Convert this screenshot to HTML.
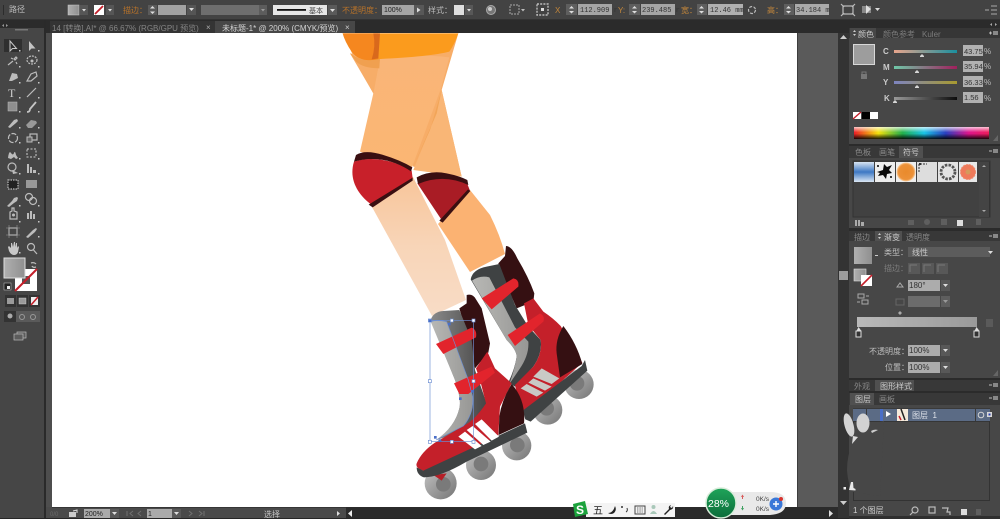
<!DOCTYPE html>
<html><head><meta charset="utf-8">
<style>
html,body{margin:0;padding:0;background:#474747;overflow:hidden}
svg{display:block;filter:blur(.35px)}
text{font-family:"Liberation Sans","Noto Sans CJK SC",sans-serif;font-size:8px;fill:#bdbdbd}
.o{fill:#b8732a}
.i{fill:#b5b5b5}
.s{stroke:#bcbcbc;fill:none;stroke-width:1.2}
.f{fill:#bcbcbc}
</style></head>
<body>
<svg width="1000" height="519" viewBox="0 0 1000 519" xmlns="http://www.w3.org/2000/svg">
<defs>
<linearGradient id="leg" x1="0" y1="0" x2="0" y2="1"><stop offset="0" stop-color="#f8c59a"/><stop offset=".5" stop-color="#f8d5b8"/><stop offset="1" stop-color="#f8dcc6"/></linearGradient>
<linearGradient id="thigh" x1="0" y1="0" x2="0" y2="1"><stop offset="0" stop-color="#f9b578"/><stop offset="1" stop-color="#fbb673"/></linearGradient>
<linearGradient id="gr" x1="0" y1="0" x2="1" y2="0"><stop offset="0" stop-color="#b0b0b0"/><stop offset="1" stop-color="#8f8f8f"/></linearGradient>
<linearGradient id="gbar" x1="0" y1="0" x2="1" y2="0"><stop offset="0" stop-color="#b9b9b9"/><stop offset="1" stop-color="#9a9a9a"/></linearGradient>
<linearGradient id="whl" x1="0" y1="0" x2="1" y2="1"><stop offset="0" stop-color="#c4c4c4"/><stop offset="1" stop-color="#747474"/></linearGradient>
<linearGradient id="grey1" x1="0" y1="0" x2="1" y2="0"><stop offset="0" stop-color="#b8b8b5"/><stop offset="1" stop-color="#979795"/></linearGradient>
<linearGradient id="grey2" x1="0" y1="0" x2="1" y2="0"><stop offset="0" stop-color="#8a8a8a"/><stop offset="1" stop-color="#454545"/></linearGradient>
<linearGradient id="spec" x1="0" y1="0" x2="1" y2="0"><stop offset="0" stop-color="#ee1c25"/><stop offset=".18" stop-color="#f5e20d"/><stop offset=".36" stop-color="#22b14c"/><stop offset=".52" stop-color="#19c5e8"/><stop offset=".68" stop-color="#2a3fc0"/><stop offset=".85" stop-color="#e0148c"/><stop offset="1" stop-color="#ee1c5a"/></linearGradient>
<linearGradient id="specv" x1="0" y1="0" x2="0" y2="1"><stop offset="0" stop-color="#fff" stop-opacity=".75"/><stop offset=".45" stop-color="#fff" stop-opacity="0"/><stop offset=".55" stop-color="#000" stop-opacity="0"/><stop offset="1" stop-color="#000" stop-opacity=".9"/></linearGradient>
<linearGradient id="s1" x1="0" y1="0" x2="1" y2="0"><stop offset="0" stop-color="#e8a58c"/><stop offset="1" stop-color="#1a8f9e"/></linearGradient>
<linearGradient id="s2" x1="0" y1="0" x2="1" y2="0"><stop offset="0" stop-color="#6fc8a8"/><stop offset="1" stop-color="#a01f5c"/></linearGradient>
<linearGradient id="s3" x1="0" y1="0" x2="1" y2="0"><stop offset="0" stop-color="#7d84c0"/><stop offset="1" stop-color="#a89a30"/></linearGradient>
<linearGradient id="s4" x1="0" y1="0" x2="1" y2="0"><stop offset="0" stop-color="#999"/><stop offset="1" stop-color="#0c0c0c"/></linearGradient>
<linearGradient id="blu" x1="0" y1="0" x2="0" y2="1"><stop offset="0" stop-color="#d8e4f2"/><stop offset=".5" stop-color="#3d78c4"/><stop offset="1" stop-color="#dbe7f3"/></linearGradient>
<radialGradient id="org"><stop offset="0" stop-color="#e98a2c"/><stop offset=".8" stop-color="#ec9138"/><stop offset="1" stop-color="#f9d2a5"/></radialGradient>
<linearGradient id="grn" x1="0" y1="0" x2="0" y2="1"><stop offset="0" stop-color="#1fa45a"/><stop offset="1" stop-color="#0c6d3a"/></linearGradient>
</defs>

<!-- base -->
<rect width="1000" height="519" fill="#474747"/>
<rect width="1000" height="20" fill="#434343"/>
<rect y="19" width="1000" height="1" fill="#333"/>
<rect y="20" width="1000" height="13" fill="#2b2b2b"/>
<rect x="50" y="21" width="165" height="12" fill="#343434"/>
<rect x="215" y="21" width="140" height="12" fill="#474747"/>
<rect x="44" y="33" width="806" height="486" fill="#5a5a5a"/>
<rect x="44" y="33" width="8" height="474" fill="#4e4e4e"/>
<rect x="52" y="33" width="745" height="474" fill="#fff"/>
<rect x="797" y="33" width="1" height="474" fill="#3d3d3d"/>
<rect y="20" width="44" height="499" fill="#464646"/>
<rect x="44" y="20" width="2" height="499" fill="#2a2a2a"/>
<rect y="20" width="44" height="8" fill="#2b2b2b"/>
<rect x="838" y="33" width="11" height="486" fill="#333"/>
<rect x="839" y="271" width="9" height="9" fill="#9c9c9c"/>
<path d="M840 501h7l-3.500 4z" fill="#ccc"/>
<path d="M840 39h7l-3.500-4z" fill="#ccc"/>
<rect x="46" y="507" width="792" height="12" fill="#4a4a4a"/>
<rect x="346" y="507" width="492" height="12" fill="#2b2b2b"/>
<rect x="52" y="507" width="294" height="1" fill="#363636"/>
<rect y="518" width="1000" height="1" fill="#262626"/>

<!-- ARTWORK -->
<g>
<g transform="translate(330,30) scale(.33333)">
 <path d="M75 90L130 190L250 410L395 440L335 180L385 10H40Z" fill="#f7ad68"/>
 <path d="M335 180L395 440L250 420L320 250Z" fill="#f9b676"/>
 <path d="M335 180L320 250L250 410L300 300Z" fill="#f2a558"/>
 <path d="M150 85Q250 70 358 82L333 175L245 415L90 365L130 190Z" fill="url(#thigh)"/>
 <path d="M60 70L150 85L130 190Z" fill="#f7ad68"/>
 <path d="M60 70Q100 100 150 85L148 115Q100 115 78 95Z" fill="#f0a050"/>
 <path d="M38 10H385Q375 40 358 65Q300 80 150 87Q90 100 65 65Q45 35 38 10Z" fill="#fb9b1d"/>
 <path d="M38 10H145V87Q90 100 65 65Q45 35 38 10Z" fill="#f5871f"/>
 <path d="M130 10H150L145 85L125 88Q138 50 130 10Z" fill="#d9691c"/>
</g>
<!-- lower legs in page coords -->
<path d="M438 224L470 190L490 215Q500 235 505 254L470 272Z" fill="#fbb272"/>
<path d="M372 207L413 177L445 240L466 300L432 316Z" fill="url(#leg)"/>
<g transform="translate(330,30) scale(.33333)">
 <path d="M72 395C130 375 200 395 245 422L248 445L125 525C85 495 55 450 72 395Z" fill="#c8202a"/>
 <path d="M72 395L78 375Q105 358 160 375Q210 390 247 412L243 424Q160 370 72 395Z" fill="#3a0f11"/>
 <path d="M116 524L248 443L248 452L128 532Z" fill="#3a0f11"/>
 <path d="M262 460Q340 430 412 462L420 482L335 570Z" fill="#a91c25"/>
 <path d="M260 442Q300 420 350 430Q390 438 412 450L415 465Q340 430 264 462Z" fill="#3a0f11"/>
 <path d="M328 572L414 478L421 483L338 578Z" fill="#3a0f11"/>
</g>
<g transform="translate(400,240) scale(.33333)">
 <!-- back wheels -->
 <circle cx="537" cy="433" r="44" fill="url(#whl)"/><circle cx="531" cy="430" r="22" fill="#7a7a7a"/>
 <circle cx="443" cy="510" r="44" fill="url(#whl)"/><circle cx="440" cy="505" r="22" fill="#7a7a7a"/>
 <!-- back boot -->
 <path d="M295 70L315 48L318 18Q335 18 352 55Q385 110 403 160L400 185L350 205L300 90Z" fill="#351012"/>
 <path d="M212 118Q218 88 260 80L298 72L345 195L385 260L422 300Q428 340 400 380L345 440L325 428Q345 385 350 350Q350 330 320 300Z" fill="#3f4243"/>
 <path d="M216 122Q240 105 268 112L345 262L385 305Q388 345 358 388L328 432Q345 385 350 350Q350 330 320 300Z" fill="url(#grey1)"/>
 <path d="M372 190L400 175L430 215Q460 235 482 258L547 368L385 515L365 530L345 435L400 380Q428 340 422 300L385 255Z" fill="#c4202a"/>
 <path d="M490 258Q465 300 470 340L480 412L547 372Q530 310 490 258Z" fill="#351012"/>
 <path d="M368 512L545 378L555 360L562 392L392 545L376 538Z" fill="#3f4243"/>
 <path d="M245 175L340 115Q358 118 355 140L275 208Z" fill="#e2242c"/>
 <path d="M323 285L420 220Q436 228 430 245L345 318Z" fill="#e2242c"/>
 <path d="M400 410L425 385L478 415L455 432Z" fill="#c9c9c5"/>
 <path d="M385 428L400 415L455 440L435 452Z" fill="#c9c9c5"/>
 <path d="M362 445L380 432L430 458L410 470Z" fill="#c9c9c5"/>
 <!-- front wheels -->
 <circle cx="350" cy="617" r="44" fill="url(#whl)"/><circle cx="352" cy="615" r="22" fill="#7a7a7a"/>
 <circle cx="243" cy="675" r="45" fill="url(#whl)"/><circle cx="243" cy="672" r="22" fill="#7a7a7a"/>
 <circle cx="122" cy="730" r="48" fill="url(#whl)"/><circle cx="130" cy="733" r="22" fill="#7a7a7a"/>
 <path d="M100 705L140 700L125 722Z" fill="#b51f27"/>
 <!-- front boot -->
 <path d="M178 205L200 190L200 165Q218 160 228 178L245 205L270 310L265 338L225 385L205 300Z" fill="#351012"/>
 <path d="M92 240Q100 215 130 213L178 210L215 300L225 390L260 490L225 560L110 600Q165 560 178 505Q185 480 165 420Z" fill="url(#grey2)"/>
 <path d="M92 245Q110 238 140 245L205 420L218 470Q222 520 190 558L108 600Q165 560 178 505Q185 480 165 420Z" fill="url(#grey1)"/>
 <path d="M228 385L262 335L285 385L335 430L300 500L295 585L200 640Q120 690 70 692Q45 685 50 670Q65 635 105 608L190 558Q225 540 258 490L240 420Z" fill="#c4202a"/>
 <path d="M335 432Q305 480 298 530L296 585L372 550Q378 480 335 432Z" fill="#351012"/>
 <path d="M50 682L70 692L375 550L382 578L200 665Q120 712 72 712Q50 705 50 682Z" fill="#3f4243"/>
 <path d="M108 312L215 263Q232 270 228 292L130 342Z" fill="#e2242c"/>
 <path d="M162 430L275 380L285 398L205 462L178 462Z" fill="#e2242c"/>
 <path d="M175 590L195 575L245 618L225 628Z" fill="#fff"/>
 <path d="M200 570L218 558L272 605L250 615Z" fill="#fff"/>
 <path d="M225 552L245 538L297 590L275 602Z" fill="#fff"/>
 <!-- selection -->
 <rect x="90" y="241" width="131" height="364" fill="none" stroke="#6d8fd2" stroke-width="2"/>
 <path d="M92 245Q110 238 140 245L205 420L218 470Q222 520 190 558L108 600" fill="none" stroke="#6d8fd2" stroke-width="2"/>
 <g fill="#fff" stroke="#6d8fd2" stroke-width="2"><rect x="85" y="237" width="9" height="9"/><rect x="151" y="237" width="9" height="9"/><rect x="216" y="237" width="9" height="9"/><rect x="85" y="419" width="9" height="9"/><rect x="216" y="419" width="9" height="9"/><rect x="85" y="601" width="9" height="9"/><rect x="151" y="601" width="9" height="9"/><rect x="216" y="601" width="9" height="9"/></g>
 <g fill="#4a6fc8"><rect x="86" y="238" width="8" height="8"/><rect x="144" y="248" width="8" height="8"/><rect x="177" y="472" width="8" height="8"/><rect x="214" y="450" width="8" height="8"/><rect x="102" y="588" width="8" height="8"/><rect x="116" y="598" width="8" height="8"/></g>
</g>
</g>

<!-- TOP BAR -->
<rect x="3" y="5" width="1" height="10" fill="#2c2c2c"/>
<text x="9" y="12">路径</text>
<rect x="68" y="5" width="11" height="10" fill="url(#gr)" stroke="#ccc" stroke-width=".5"/>
<rect x="80" y="5" width="8" height="10" fill="#565656"/><path d="M82 9h4l-2 2.500z" fill="#ddd"/>
<rect x="94" y="5" width="10" height="10" fill="#fff"/><path d="M95 14L103 6" stroke="#c41f2a" stroke-width="1.800"/>
<rect x="106" y="5" width="8" height="10" fill="#565656"/><path d="M108 9h4l-2 2.500z" fill="#ddd"/>
<text x="123" y="13" class="o">描边：</text>
<rect x="148" y="5" width="9" height="10" fill="#5a5a5a"/><path d="M150 8.500h5l-2.500-2.500zM150 11.500h5l-2.500 2.500z" fill="#ddd"/>
<rect x="158" y="5" width="28" height="10" fill="#a2a2a2"/>
<rect x="187" y="5" width="9" height="10" fill="#555"/><path d="M189 8h5l-2.500 3z" fill="#ddd"/>
<rect x="201" y="5" width="58" height="10" fill="#6e6e6e"/>
<rect x="259" y="5" width="8" height="10" fill="#5c5c5c"/><path d="M261 9h4l-2 2.500z" fill="#999"/>
<rect x="273" y="5" width="54" height="10" fill="#e6e6e6"/>
<rect x="277" y="9" width="29" height="1.800" fill="#111"/>
<text x="309" y="13" style="fill:#444;font-size:7px">基本</text>
<rect x="328" y="5" width="9" height="10" fill="#5a5a5a"/><path d="M330 9h5l-2.500 3z" fill="#ddd"/>
<text x="342" y="13" class="o">不透明度：</text>
<rect x="382" y="5" width="32" height="10" fill="#a5a5a5"/>
<text x="384" y="12" style="fill:#222;font-size:7px">100%</text>
<rect x="414" y="5" width="10" height="10" fill="#585858"/><path d="M417 7.500v5l3.500-2.500z" fill="#ddd"/>
<text x="428" y="13">样式：</text>
<rect x="454" y="5" width="10" height="10" fill="#dedede"/>
<rect x="465" y="5" width="8" height="10" fill="#585858"/><path d="M467 9h4l-2 2.500z" fill="#ddd"/>
<circle cx="491" cy="10" r="4.500" fill="#777" stroke="#aaa"/><circle cx="490" cy="9" r="2" fill="#ccc"/>
<rect x="510" y="5" width="9" height="9" fill="none" stroke="#aaa" stroke-dasharray="2 1"/><path d="M521 9h4l-2 2.500z" fill="#bbb"/>
<rect x="537" y="4" width="11" height="11" fill="none" stroke="#bbb" stroke-dasharray="2 1.200" stroke-width="1.400"/><rect x="541" y="8" width="3" height="3" fill="#ddd"/>
<text x="555" y="13" style="fill:#c4873b">X</text>
<rect x="566" y="4" width="11" height="11" fill="#5e5e5e"/><path d="M569 8.500h5l-2.500-2.500zM569 11h5l-2.500 2.500z" fill="#ddd"/>
<rect x="578" y="4" width="34" height="11" fill="#a5a5a5"/><text x="580" y="12" style="fill:#333;font-size:7px;font-family:'Liberation Mono',monospace">112.909 r</text>
<text x="618" y="13" style="fill:#c4873b">Y:</text>
<rect x="629" y="4" width="11" height="11" fill="#5e5e5e"/><path d="M632 8.500h5l-2.500-2.500zM632 11h5l-2.500 2.500z" fill="#ddd"/>
<rect x="641" y="4" width="34" height="11" fill="#a5a5a5"/><text x="642" y="12" style="fill:#333;font-size:7px;font-family:'Liberation Mono',monospace">239.485 r</text>
<text x="681" y="13" style="fill:#c4873b">宽：</text>
<rect x="697" y="4" width="10" height="11" fill="#5e5e5e"/><path d="M699 8.500h5l-2.500-2.500zM699 11h5l-2.500 2.500z" fill="#ddd"/>
<rect x="708" y="4" width="35" height="11" fill="#b0b0b0"/><text x="710" y="12" style="fill:#333;font-size:7px;font-family:'Liberation Mono',monospace">12.46 mm</text>
<circle cx="752" cy="10" r="3.500" class="s" stroke-dasharray="3 1.500"/>
<text x="767" y="13" style="fill:#c4873b">高：</text>
<rect x="784" y="4" width="10" height="11" fill="#5e5e5e"/><path d="M786 8.500h5l-2.500-2.500zM786 11h5l-2.500 2.500z" fill="#ddd"/>
<rect x="795" y="4" width="34" height="11" fill="#aaa"/><text x="796" y="12" style="fill:#333;font-size:7px;font-family:'Liberation Mono',monospace">34.184 m</text>
<path d="M843 6h10v8h-10zM841 4l3 3M855 4l-3 3M841 16l3-3M855 16l-3-3" class="s" stroke-width="1"/>
<rect x="862" y="6" width="9" height="7" fill="#888"/><path d="M866 5l5 4-5 5z" fill="#ddd"/>
<path d="M875 8h5l-2.500 3z" fill="#ddd"/>
<path d="M985 10h4M991 6h6M991 10h6M991 14h6" stroke="#aaa" fill="none"/>

<!-- TABS -->
<text x="52" y="31" style="fill:#858585">14 [转换].AI* @ 66.67% (RGB/GPU 预览)</text>
<text x="206" y="30" style="fill:#aaa">×</text>
<text x="222" y="31" style="fill:#d5d5d5">未标题-1* @ 200% (CMYK/预览)</text>
<text x="345" y="30" style="fill:#ccc">×</text>
<path d="M4 24l-2 1.500 2 1.500zM6 24l2 1.500-2 1.500z" fill="#999"/>
<rect x="15" y="29" width="13" height="1.500" fill="#777"/>

<!-- TOOLBAR -->
<rect x="4" y="39" width="18" height="13" fill="#2f2f2f"/>
<g>
<path d="M10 41v10l2.500-2.500h4z" fill="none" stroke="#c8c8c8"/>
<path d="M29 41v10l2.500-2.500h4z" fill="#c4c4c4"/>
<path d="M8 65l5-4M14 59l2-2 1 1-2 2zM11 58l2 1M16 62l1 2" class="s"/>
<ellipse cx="32" cy="60" rx="5" ry="4" class="s" stroke-dasharray="2 1"/><circle cx="32" cy="61" r="1.500" class="f"/>
<path d="M9 81l3-8 5 1 1 4-6 3z" class="f"/>
<path d="M27 81l4-7 5-2 1 4-6 5z" class="s"/>
<text x="8" y="97" style="font-family:'Liberation Serif',serif;font-size:12px;fill:#ccc">T</text>
<path d="M27 97L36 88" class="s"/>
<rect x="8" y="102" width="9" height="9" fill="#8f8f8f" stroke="#bbb" stroke-width=".5"/>
<path d="M27 112q3 0 3-3l6-7" stroke="#c4c4c4" stroke-width="1.800" fill="none"/>
<path d="M8 127l6-7 3-1 1 2-2 2-6 5z" class="f"/>
<path d="M26 125l5-5 5 1 1 2-5 5h-4z" fill="#999"/>
<circle cx="13" cy="138" r="4.500" class="s" stroke-dasharray="5 1.500"/>
<rect x="30" y="134" width="7" height="6" class="s"/><rect x="27" y="137" width="5" height="5" fill="#666" stroke="#bcbcbc"/>
<path d="M8 158q1-8 3-5t3 0 2 2l2 3-2 1-2-2-3 2z" class="f"/>
<rect x="27" y="149" width="9" height="8" fill="none" stroke="#ccc" stroke-dasharray="2 1.500"/>
<circle cx="12" cy="167" r="4" class="s"/><path d="M12 170l6 3-5 1z" class="f"/>
<rect x="27" y="164" width="2" height="9" class="f"/><rect x="30" y="167" width="2" height="6" class="f"/><rect x="33" y="170" width="3" height="3" class="f"/>
<rect x="8" y="180" width="10" height="9" fill="#222" stroke="#bbb" stroke-dasharray="1.500 1" stroke-width="1.200"/>
<rect x="26" y="180" width="11" height="8" fill="#999"/>
<path d="M7 206l5-5 2-3 3-1 1 1-1 3-3 2-5 4z" class="f"/>
<circle cx="29" cy="197" r="3.500" class="s"/><circle cx="33" cy="201" r="3.500" class="s"/>
<path d="M10 219v-7l2-1v-3h2v3l3 1v7z" class="s"/><circle cx="13.500" cy="215" r="1.500" class="f"/>
<rect x="27" y="213" width="2" height="6" class="f"/><rect x="30" y="211" width="2" height="8" class="f"/><rect x="33" y="214" width="2" height="5" class="f"/>
<rect x="9" y="228" width="8" height="7" class="s"/><path d="M6 228h14M6 235h14M9 225v13M17 225v13" stroke="#999" fill="none" stroke-width=".6"/>
<path d="M26 237l7-7 3-2 1 1-2 3-7 6z" class="f"/>
<path d="M8 247l1 4q2 4 5 4t4-3l1-5-1-1-1 2 0-5h-1l-1 4v-5h-1l-1 5-1-4h-1l0 5-2-2z" fill="#c8c8c8"/>
<circle cx="31" cy="247" r="3.500" class="s"/><path d="M33.500 250l3.500 4" class="s" stroke-width="1.800"/>
</g>
<g fill="#c8c8c8"><rect x="19" y="50" width="1.500" height="1.500"/><rect x="38" y="50" width="1.500" height="1.500"/><rect x="19" y="66" width="1.500" height="1.500"/><rect x="38" y="66" width="1.500" height="1.500"/><rect x="19" y="82" width="1.500" height="1.500"/><rect x="38" y="82" width="1.500" height="1.500"/><rect x="19" y="97" width="1.500" height="1.500"/><rect x="38" y="97" width="1.500" height="1.500"/><rect x="19" y="111" width="1.500" height="1.500"/><rect x="38" y="111" width="1.500" height="1.500"/><rect x="19" y="127" width="1.500" height="1.500"/><rect x="38" y="127" width="1.500" height="1.500"/><rect x="19" y="142" width="1.500" height="1.500"/><rect x="38" y="142" width="1.500" height="1.500"/><rect x="19" y="158" width="1.500" height="1.500"/><rect x="38" y="158" width="1.500" height="1.500"/><rect x="19" y="173" width="1.500" height="1.500"/><rect x="38" y="173" width="1.500" height="1.500"/><rect x="19" y="205" width="1.500" height="1.500"/><rect x="38" y="205" width="1.500" height="1.500"/><rect x="19" y="221" width="1.500" height="1.500"/><rect x="38" y="221" width="1.500" height="1.500"/><rect x="38" y="236" width="1.500" height="1.500"/><rect x="19" y="252" width="1.500" height="1.500"/></g>
<!-- fill / stroke swatches -->
<rect x="15" y="269" width="22" height="22" fill="#fff"/>
<rect x="22" y="276" width="8" height="8" fill="#555"/>
<path d="M15 291L37 269" stroke="#c41f2a" stroke-width="2"/>
<rect x="4" y="258" width="21" height="20" fill="url(#gr)" stroke="#dedede"/>
<path d="M31 263q3-1 5 1M36 267q-3 1-4-1" class="s" stroke-width=".9"/>
<rect x="4" y="283" width="7" height="7" fill="#222" stroke="#ccc" stroke-width=".5"/><rect x="7" y="286" width="3" height="3" fill="#eee"/>
<rect x="5" y="295" width="11" height="12" fill="#333"/><rect x="7" y="298" width="7" height="6" fill="#9a9a9a"/>
<rect x="17" y="295" width="11" height="12" fill="#333"/><rect x="19" y="298" width="7" height="6" fill="#9a9a9a" stroke="#ddd" stroke-width=".4"/>
<rect x="29" y="295" width="11" height="12" fill="#333"/><rect x="31" y="297" width="7" height="8" fill="#eee"/><path d="M31 305l7-8" stroke="#c41f2a" stroke-width="1.600"/>
<rect x="4" y="311" width="36" height="11" fill="#5a5a5a"/><rect x="4" y="311" width="12" height="11" fill="#333"/>
<circle cx="10" cy="316" r="2.500" fill="#aaa"/><circle cx="22" cy="317" r="2.500" fill="none" stroke="#999"/><circle cx="33" cy="317" r="2.500" fill="none" stroke="#999"/>
<rect x="17" y="332" width="9" height="6" fill="#5c5c5c" stroke="#bbb" stroke-width=".7"/><rect x="14" y="334" width="9" height="6" fill="#5c5c5c" stroke="#bbb" stroke-width=".7"/>

<!-- RIGHT PANELS -->
<rect x="849" y="20" width="151" height="499" fill="#474747"/>
<rect x="849" y="20" width="151" height="8" fill="#2b2b2b"/>
<path d="M992 23l-2 1.500 2 1.500zM995 23l2 1.500-2 1.500z" fill="#aaa"/>
<rect x="849" y="28" width="151" height="10" fill="#363636"/>
<rect x="850" y="28" width="26" height="10" fill="#474747"/>
<text x="858" y="37" style="fill:#ccc">颜色</text>
<path d="M853 32l1.500-2 1.500 2zM853 34l1.500 2 1.500-2z" fill="#ccc"/>
<text x="883" y="37" style="fill:#7c7c7c">颜色参考</text>
<text x="922" y="37" style="fill:#7c7c7c">Kuler</text>
<path d="M989 33h3M990.500 31.500v3" stroke="#bbb"/><rect x="993" y="31" width="5" height="4" fill="#888"/>
<rect x="853.500" y="44.500" width="21" height="20" fill="#9d9d9d" stroke="#d8d8d8"/>
<rect x="861" y="74" width="6" height="5" fill="#777"/><path d="M862 74v-2h4v2" stroke="#777" fill="none"/>
<g font-weight="bold"><text x="883" y="54" style="fill:#ccc">C</text><text x="883" y="70" style="fill:#ccc">M</text><text x="883" y="85" style="fill:#ccc">Y</text><text x="884" y="101" style="fill:#ccc">K</text></g>
<rect x="894" y="50" width="63" height="3" fill="url(#s1)"/>
<rect x="894" y="66" width="63" height="3" fill="url(#s2)"/>
<rect x="894" y="81" width="63" height="3" fill="url(#s3)"/>
<rect x="894" y="97" width="63" height="3" fill="url(#s4)"/>
<g fill="#d5d5d5"><path d="M922 54l2 2v1h-4v-1zM917 70l2 2v1h-4v-1zM917 85l2 2v1h-4v-1zM895 100l2 2v1h-4v-1z"/></g>
<g><rect x="963" y="45" width="20" height="11" fill="#b1b1b1"/><rect x="963" y="61" width="20" height="11" fill="#b1b1b1"/><rect x="963" y="76" width="20" height="11" fill="#b1b1b1"/><rect x="963" y="92" width="20" height="11" fill="#b1b1b1"/></g>
<text x="964" y="54" style="fill:#333;font-size:7.500px">43.75</text><text x="964" y="69" style="fill:#333;font-size:7.500px">35.94</text><text x="964" y="85" style="fill:#333;font-size:7.500px">36.33</text><text x="964" y="100" style="fill:#333;font-size:7.500px">1.56</text>
<text x="984" y="54">%</text><text x="984" y="69">%</text><text x="984" y="85">%</text><text x="984" y="101">%</text>
<rect x="853" y="112" width="8" height="7" fill="#fff"/><path d="M853 119l8-7" stroke="#c41f2a" stroke-width="1.400"/>
<rect x="862" y="112" width="8" height="7" fill="#000"/><rect x="870" y="112" width="8" height="7" fill="#fff"/>
<rect x="854" y="127" width="135" height="12" fill="url(#spec)"/>
<rect x="854" y="127" width="135" height="12" fill="url(#specv)"/>
<path d="M998 141v-6l-5 6z" fill="#666"/>
<!-- swatches panel -->
<rect x="849" y="144" width="151" height="2" fill="#2b2b2b"/>
<rect x="849" y="146" width="151" height="12" fill="#383838"/>
<rect x="899" y="146" width="24" height="12" fill="#505050"/>
<text x="855" y="155" style="fill:#888">色板</text><text x="879" y="155" style="fill:#888">画笔</text><text x="903" y="155" style="fill:#ccc">符号</text>
<path d="M989 151h3" stroke="#bbb"/><rect x="993" y="149" width="5" height="4" fill="#888"/>
<rect x="853" y="161" width="137" height="56" fill="#414141" stroke="#333"/>
<rect x="854" y="162" width="20" height="20" fill="url(#blu)"/>
<rect x="875" y="162" width="20" height="20" fill="#ededed"/>
<path d="M877 172l6-2 1-6 3 3 5-2-3 5 3 3-5 1-1 5-3-4-5 1 2-3z" fill="#0a0a0a"/>
<circle cx="878" cy="166" r="1" fill="#000"/><circle cx="891" cy="177" r="1" fill="#000"/>
<rect x="896" y="162" width="20" height="20" fill="#eee"/><circle cx="906" cy="172" r="9.500" fill="url(#org)"/>
<rect x="917" y="162" width="20" height="20" fill="#ddd"/><path d="M919 172v-8h8" fill="none" stroke="#333" stroke-width="1" stroke-dasharray="2 1"/><rect x="919" y="163" width="2" height="2" fill="#333"/>
<rect x="938" y="162" width="20" height="20" fill="#e3e3e3"/><circle cx="948" cy="172" r="7" fill="none" stroke="#555" stroke-width="2.800" stroke-dasharray="2.500 1.200"/>
<rect x="959" y="162" width="18" height="20" fill="#e8e8e8"/><circle cx="968" cy="172" r="7.500" fill="#ef7a5a" stroke="#ef8b6f" stroke-dasharray="2 1"/><circle cx="968" cy="172" r="2.500" fill="#d49a5b"/>
<rect x="989" y="162" width="1" height="55" fill="#333"/>
<rect x="979" y="162" width="10" height="55" fill="#444"/>
<path d="M982 167l2-2 2 2zM982 210l2 2 2-2z" fill="#aaa"/>
<rect x="855" y="220" width="2" height="6" fill="#aaa"/><rect x="858" y="220" width="2" height="6" fill="#aaa"/><rect x="861" y="222" width="3" height="4" fill="#aaa"/>
<g fill="#5f5f5f"><rect x="908" y="220" width="6" height="5"/><circle cx="927" cy="222" r="3"/><rect x="941" y="219" width="6" height="6"/><rect x="976" y="219" width="5" height="6"/></g>
<rect x="957" y="220" width="6" height="6" fill="#ddd"/>
<!-- gradient panel -->
<rect x="849" y="228" width="151" height="3" fill="#2b2b2b"/>
<rect x="849" y="231" width="151" height="10" fill="#383838"/>
<rect x="875" y="231" width="27" height="10" fill="#505050"/>
<text x="854" y="240" style="fill:#888">描边</text>
<path d="M878 235l1.500-2 1.500 2zM878 237l1.500 2 1.500-2z" fill="#ccc"/>
<text x="884" y="240" style="fill:#ccc">渐变</text><text x="906" y="240" style="fill:#888">透明度</text>
<path d="M989 236h3" stroke="#bbb"/><rect x="993" y="234" width="5" height="4" fill="#888"/>
<rect x="854" y="247" width="18" height="17" fill="url(#gr)"/>
<path d="M875 255h3v1h-3z" fill="#ccc"/>
<text x="884" y="255" style="fill:#c0c0c0">类型：</text>
<rect x="908" y="247" width="82" height="10" fill="#5c5c5c"/><text x="912" y="255" style="fill:#ccc">线性</text><path d="M988 251h5l-2.500 3z" fill="#ddd"/>
<text x="884" y="271" style="fill:#7d7d7d">描边：</text>
<g fill="#585858"><rect x="908" y="263" width="12" height="11"/><rect x="922" y="263" width="12" height="11"/><rect x="936" y="263" width="12" height="11"/></g>
<path d="M910 272v-7h7M924 272v-7h7M938 272v-7h7" stroke="#777" fill="none"/>
<rect x="854" y="269" width="12" height="12" fill="url(#gr)" stroke="#ddd" stroke-width=".6"/>
<rect x="861" y="275" width="11" height="11" fill="#fff"/><path d="M861 286l11-11" stroke="#c41f2a" stroke-width="1.600"/>
<path d="M858 294h6v4h-6zM862 300h6v4h-6z" fill="none" stroke="#aaa"/><path d="M866 296h3M857 302h3" stroke="#aaa"/>
<path d="M897 287l3-4 3 4z" fill="none" stroke="#aaa"/>
<rect x="908" y="280" width="32" height="11" fill="#acacac"/><text x="909" y="288" style="fill:#333">180°</text>
<rect x="941" y="280" width="9" height="11" fill="#585858"/><path d="M943 284h5l-2.500 3z" fill="#ddd"/>
<rect x="896" y="299" width="8" height="6" fill="none" stroke="#666"/>
<rect x="908" y="296" width="32" height="11" fill="#6c6c6c"/><rect x="941" y="296" width="9" height="11" fill="#5e5e5e"/><path d="M943 300h5l-2.500 3z" fill="#999"/>
<path d="M900 311l-2 2 2 2 2-2z" fill="#aaa"/>
<rect x="857" y="317" width="120" height="10" fill="url(#gbar)"/>
<g fill="#333" stroke="#ddd"><rect x="856" y="331" width="5" height="6"/><rect x="974" y="331" width="5" height="6"/></g>
<path d="M858.500 327l-2 4h5zM976.500 327l-2 4h5z" fill="#ddd"/>
<rect x="986" y="319" width="7" height="8" fill="#5a5a5a"/>
<text x="869" y="354" style="fill:#c0c0c0">不透明度：</text>
<rect x="908" y="345" width="32" height="11" fill="#acacac"/><text x="909" y="353" style="fill:#333">100%</text>
<rect x="941" y="345" width="9" height="11" fill="#585858"/><path d="M943 349h5l-2.500 3z" fill="#ddd"/>
<text x="885" y="370" style="fill:#c0c0c0">位置：</text>
<rect x="908" y="362" width="32" height="11" fill="#acacac"/><text x="909" y="370" style="fill:#333">100%</text>
<rect x="941" y="362" width="9" height="11" fill="#585858"/><path d="M943 366h5l-2.500 3z" fill="#ddd"/>
<path d="M998 376v-6l-5 6z" fill="#666"/>
<!-- appearance -->
<rect x="849" y="378" width="151" height="2" fill="#2b2b2b"/>
<rect x="849" y="380" width="151" height="11" fill="#383838"/>
<rect x="875" y="380" width="39" height="11" fill="#505050"/>
<text x="854" y="389" style="fill:#888">外观</text><text x="880" y="389" style="fill:#ccc">图形样式</text>
<path d="M989 385h3" stroke="#bbb"/><rect x="993" y="383" width="5" height="4" fill="#888"/>
<!-- layers -->
<rect x="849" y="391" width="151" height="2" fill="#2b2b2b"/>
<rect x="849" y="393" width="151" height="12" fill="#383838"/>
<rect x="850" y="393" width="24" height="12" fill="#505050"/>
<text x="855" y="402" style="fill:#ccc">图层</text><text x="879" y="402" style="fill:#888">画板</text>
<path d="M989 398h3" stroke="#bbb"/><rect x="993" y="396" width="5" height="4" fill="#888"/>
<rect x="853" y="408" width="137" height="13" fill="#5b6b85"/>
<rect x="853" y="408" width="137" height="1" fill="#3a3a3a"/>
<rect x="866" y="408" width="1" height="13" fill="#3a3a3a"/><rect x="880" y="409" width="3" height="12" fill="#4a6fc8"/>
<path d="M886 411v6l5-3z" fill="#fff"/>
<rect x="897" y="409" width="11" height="12" fill="#f5e9da"/><path d="M901 409l4 11" stroke="#222" stroke-width="1.500"/><path d="M899 416l2 4" stroke="#c41f2a" stroke-width="1.500"/>
<text x="912" y="418" style="fill:#dfe3ea">图层&#160;&#160;1</text>
<rect x="975" y="408" width="1" height="13" fill="#3a3a3a"/>
<circle cx="981" cy="415" r="2.800" fill="none" stroke="#d5d5d5"/>
<rect x="987" y="412" width="5" height="5" fill="#d8d8d8"/><rect x="988.500" y="413.500" width="2" height="2" fill="#2a3fb0"/>
<rect x="853" y="421" width="137" height=".8" fill="#333"/>
<rect x="853" y="421" width="1" height="80" fill="#333"/><rect x="989" y="421" width="1" height="80" fill="#333"/><rect x="853" y="500" width="137" height="1" fill="#333"/>
<text x="853" y="513" style="fill:#d0d0d0">1 个图层</text>
<circle cx="915" cy="510" r="3" class="s"/><path d="M913 512l-3 3" class="s"/>
<rect x="929" y="507" width="6" height="6" class="s"/><path d="M942 508h6l-1 4h3v3" class="s"/>
<rect x="961" y="509" width="6" height="6" fill="#ddd"/>
<rect x="976" y="509" width="5" height="6" fill="#5f5f5f"/>
<rect x="849" y="516" width="151" height="3" fill="#2f2f2f"/>
<!-- blob over layers panel -->
<path d="M853 442Q847 455 847 470Q848 485 853 492L880 496L884 421L868 425Z" fill="#474747"/>
<ellipse cx="849" cy="425" rx="4.500" ry="12" fill="#d4d4d4" transform="rotate(-15 849 425)"/>
<ellipse cx="863" cy="423" rx="6.500" ry="9.500" fill="#d2d2d2"/>
<path d="M853 436l5 1-6 7z" fill="#ddd"/>
<path d="M871 431q3-2 7-1l-6 3z" fill="#ccc"/>
<path d="M849 490l2-8 2 0 .5 6 2 1v1.500z" fill="#e8e8e8"/>
<rect x="843.500" y="487" width="2.500" height="2.500" fill="#eee"/>

<!-- STATUS BAR -->
<text x="50" y="516" style="fill:#6a6a6a;font-size:6px">0/0</text>
<rect x="69" y="512" width="7" height="5" fill="#ccc"/><path d="M73 511l4-1v3" stroke="#ddd" fill="none"/>
<rect x="84" y="509" width="26" height="9" fill="#aaa"/><text x="85" y="516" style="fill:#222;font-size:7px">200%</text>
<rect x="110" y="509" width="9" height="9" fill="#595959"/><path d="M112 512h5l-2.500 3z" fill="#ddd"/>
<path d="M127 511v5M133 511l-3 2.500 3 2.500M141 511l-3 2.500 3 2.500" stroke="#707070" fill="none"/>
<rect x="147" y="509" width="25" height="9" fill="#aaa"/><text x="148" y="516" style="fill:#222;font-size:7px">1</text>
<rect x="172" y="509" width="9" height="9" fill="#595959"/><path d="M174 512h5l-2.500 3z" fill="#ddd"/>
<path d="M189 511l3 2.500-3 2.500M199 511l3 2.500-3 2.500M204 511v5" stroke="#707070" fill="none"/>
<text x="264" y="517" style="fill:#c8c8c8">选择</text>
<path d="M337 511v5l3-2.500z" fill="#ddd"/>
<path d="M352 510v7l-4-3.500z" fill="#eee"/>
<path d="M829 510v7l4-3.500z" fill="#ddd"/>

<!-- IME bar -->
<rect x="586" y="503" width="89" height="14" fill="#f4f4f4"/>
<path d="M573 504l12-3 3 13-13 3z" fill="#1ca23c"/>
<text x="576" y="514" style="fill:#fff;font-size:12px;font-weight:bold">S</text>
<text x="593" y="514" style="fill:#222;font-size:10px">五</text>
<path d="M615 506q2 4-1 7-3 2-6 0 5 0 7-7z" fill="#222"/>
<circle cx="622" cy="507" r="1" fill="#333"/><path d="M627 508q1 3-1 4" stroke="#333" fill="none"/>
<rect x="635" y="506" width="10" height="8" fill="none" stroke="#444"/><path d="M637 508h6M637 510h6M637 512h6" stroke="#444" stroke-width=".7" stroke-dasharray="1 .6"/>
<circle cx="653.500" cy="507" r="2" fill="#a9c8b9"/><path d="M650 514q3.500-6 7 0z" fill="#a9c8b9"/>
<path d="M664 514l5-5q-1-3 2-4l-1 2 2 1 1-2q1 3-3 4l-5 5z" fill="#222"/>
<!-- net widget -->
<path d="M722 492H770Q786 492 786 503T770 515H722Z" fill="#e9e9e9"/>
<circle cx="721" cy="503" r="15" fill="url(#grn)" stroke="#d8ecd9" stroke-width="1.500"/>
<text x="708" y="507" style="fill:#fff;font-size:10.500px">28%</text>
<path d="M741 497l1.500-2.500 1.500 2.500h-1v2h-1v-2z" fill="#d85a5a"/>
<path d="M741 508l1.500 2.500 1.500-2.500h-1v-2h-1v2z" fill="#3fa061"/>
<text x="756" y="501" style="fill:#444;font-size:6.500px">0K/s</text>
<text x="756" y="511" style="fill:#444;font-size:6.500px">0K/s</text>
<circle cx="776" cy="504" r="6.500" fill="#3a78d8"/><path d="M773 504h6M776 501v6" stroke="#fff" stroke-width="1.400"/>
<circle cx="781" cy="499" r="2" fill="#d8342f"/>
</svg>
</body></html>
